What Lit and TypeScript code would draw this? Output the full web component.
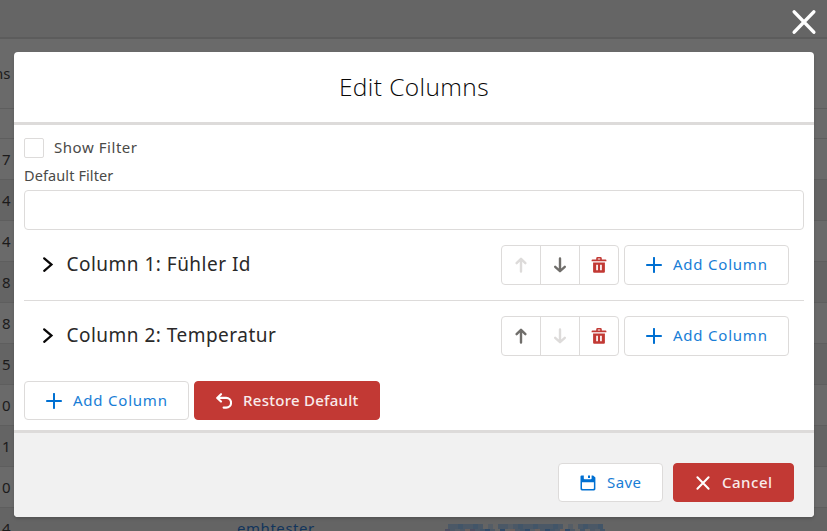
import { LitElement, html, css, svg, nothing } from "lit";
import { customElement, property } from "lit/decorators.js";

const icons: Record<string, unknown> = {
  plus: svg`<path d="M8 .9V15.1M.9 8H15.1" stroke="currentColor" stroke-width="2" stroke-linecap="round" fill="none"/>`,
  chevron: svg`<path d="M4.2 1.3L11.5 7.6L4.2 13.9" stroke="currentColor" stroke-width="2.2" stroke-linecap="round" stroke-linejoin="miter" fill="none"/>`,
  up: svg`<path d="M8 14.5V2.2M3.6 6.2L8 1.8L12.4 6.2" stroke="currentColor" stroke-width="2.4" stroke-linecap="round" stroke-linejoin="round" fill="none"/>`,
  down: svg`<path d="M8 1.5V13.8M3.2 9.8L8 14.2L12.8 9.8" stroke="currentColor" stroke-width="2.4" stroke-linecap="round" stroke-linejoin="round" fill="none"/>`,
  trash: svg`<path fill="currentColor" fill-rule="evenodd" d="M5.2 2.6V1.4Q5.2 0 6.6 0H9.4Q10.8 0 10.8 1.4V2.6H14.6Q15.4 2.6 15.4 3.3V4.2H.6V3.3Q.6 2.6 1.4 2.6ZM6.8 2.6H9.2V1.4H6.8ZM2.1 5.4H13.9V14.8Q13.9 15.8 12.9 15.8H3.1Q2.1 15.8 2.1 14.8ZM5.2 7.8V13.2H6.9V7.8ZM9.1 7.8V13.2H10.8V7.8Z"/>`,
  undo: svg`<path d="M5 1.2L1.2 4.9L5 8.6M1.4 4.9H10.2A4.7 4.7 0 0 1 10.2 14.6H7.6" stroke="currentColor" stroke-width="2.1" stroke-linecap="round" stroke-linejoin="round" fill="none"/>`,
  save: svg`<path fill="currentColor" fill-rule="evenodd" d="M1.6.5H3.8V3.4Q3.8 4.2 4.6 4.2H10.8Q11.6 4.2 11.6 3.4V.5H13.1L15.4 2.6V14Q15.4 15.4 14 15.4H1.9Q.5 15.4.5 14V1.6Q.5.5 1.6.5ZM8 .5H10V3H8ZM2 7.2V13.2Q2 14 2.8 14H13.1Q13.9 14 13.9 13.2V7.2Z"/>`,
  close: svg`<path d="M2.4 2.2L13.6 13.8M13.6 2.2L2.4 13.8" stroke="currentColor" stroke-width="2" stroke-linecap="round" fill="none"/>`,
};

@customElement("ui-icon")
class UiIcon extends LitElement {
  @property() name = "plus";
  static styles = css`
    :host { display: block; width: 16px; height: 16px; flex: none; }
    svg { display: block; width: 100%; height: 100%; }
  `;
  render() {
    return html`<svg viewBox="0 0 16 16">${icons[this.name]}</svg>`;
  }
}

@customElement("ui-button")
class UiButton extends LitElement {
  @property() icon = "plus";
  @property() label = "";
  @property({ reflect: true }) variant = "neutral";
  static styles = css`
    :host { display: block; flex: none; }
    button {
      display: flex; align-items: center; gap: 11px; box-sizing: border-box;
      width: 100%; height: 100%; padding: 0 0 0 21px; margin: 0;
      border: 1px solid #dddbda; border-radius: 4px; background: #fff; color: #0070d2;
      font: 15px "Noto Sans", sans-serif; letter-spacing: .78px; white-space: nowrap;
    }
    span { padding-bottom: 2px; opacity: .9; }
    .save { letter-spacing: .4px; }
    :host([variant="danger"]) button {
      background: #c23934; border-color: #c23934; color: #fff;
      font-weight: 500; letter-spacing: .27px;
    }
    :host([variant="danger"]) .close { letter-spacing: .5px; }
  `;
  render() {
    return html`<button><ui-icon name=${this.icon}></ui-icon><span class=${this.icon}>${this.label}</span></button>`;
  }
}

@customElement("column-row")
class ColumnRow extends LitElement {
  @property() heading = "";
  @property({ type: Boolean }) first = false;
  @property({ type: Boolean }) last = false;
  static styles = css`
    :host { display: flex; align-items: center; height: 70px; padding: 0 15px 0 16px; }
    .heading {
      flex: 1; margin-left: 10.5px; padding-bottom: 2px; color: #2a2929; white-space: nowrap;
      font: 19px "Noto Sans", sans-serif; letter-spacing: .48px;
    }
    .chevron { color: #080707; }
    .group { display: flex; height: 40px; width: 118px; box-sizing: border-box; border: 1px solid #dddbda; border-radius: 4px; margin-right: 5px; }
    .cell { flex: 1; display: flex; align-items: center; justify-content: center; color: #706e6b; }
    .cell + .cell { border-left: 1px solid #dddbda; }
    .cell.off { color: #dddbda; }
    .cell.trash { color: #c23934; }
    .add { width: 165px; height: 40px; }
  `;
  render() {
    return html`
      <ui-icon class="chevron" name="chevron"></ui-icon>
      <span class="heading">${this.heading}</span>
      <div class="group">
        <div class="cell ${this.first ? "off" : ""}"><ui-icon name="up"></ui-icon></div>
        <div class="cell ${this.last ? "off" : ""}"><ui-icon name="down"></ui-icon></div>
        <div class="cell trash"><ui-icon name="trash"></ui-icon></div>
      </div>
      <ui-button class="add" label="Add Column"></ui-button>
    `;
  }
}

const rows = ["7", "4", "4", "8", "8", "5", "0", "1", "0", "4"];

// Pixelated name: each letter picks the tone of one 5px block.
const tones: Record<string, string> = { a: "#4b5866", b: "#425568", c: "#555d66", d: "#6a5f5c", e: "#4b4d60", f: "#2f4a68" };
const mosaic = ["aabaaba.c.aacabaabaaaba.c.abaab", "eacadeabfa.f.dabfcdafbadfa.b.acb"];

@customElement("app-root")
class AppRoot extends LitElement {
  static styles = css`
    :host {
      display: block; position: relative; width: 827px; height: 531px; overflow: hidden;
      background: #6a6a6a; font-family: "Noto Sans", sans-serif;
    }
    .page { color: #1c1b1b; font-size: 15px; }
    .toolbar { height: 39px; box-sizing: border-box; background: #656565; border-bottom: 2px solid #5c5c5c; }
    .head { height: 70px; box-sizing: border-box; border-bottom: 1px solid #5e5e5e; display: flex; align-items: center; }
    .head span, .num { width: 10.5px; display: flex; justify-content: flex-end; white-space: nowrap; padding-bottom: 1px; }
    .sub { height: 30px; box-sizing: border-box; border-bottom: 1px solid #5e5e5e; }
    .row { height: 41px; box-sizing: border-box; border-bottom: 1px solid #5e5e5e; display: flex; align-items: center; }
    .row:nth-child(odd) { background: #646464; }
    .link { margin-left: 226.5px; width: 208px; color: #12355c; letter-spacing: .55px; }
    .mosaic { width: 160px; height: 10px; margin-top: 2px; }
    .modal {
      position: absolute; left: 14px; top: 52px; width: 800px; height: 465px;
      display: flex; flex-direction: column; border-radius: 4px; overflow: hidden;
      background: #fff; box-shadow: 0 2px 3px rgba(0, 0, 0, .16);
    }
    .close { position: absolute; left: 790px; top: 8px; width: 28px; height: 28px; color: #fff; }
    header {
      height: 73px; padding-bottom: 1px; box-sizing: border-box; border-bottom: 3px solid #dddbda; flex: none;
      display: flex; align-items: center; justify-content: center; color: #080707;
      font: 300 24.5px "Open Sans", sans-serif; letter-spacing: .4px;
    }
    main { height: 305px; padding: 13px 10px 0; box-sizing: border-box; }
    .check { display: flex; align-items: center; gap: 10px; height: 20px; font-size: 15px; letter-spacing: .55px; color: #4a4a48; }
    .check .text { padding-bottom: 2px; }
    .box { width: 20px; height: 20px; box-sizing: border-box; border: 1px solid #dddbda; border-radius: 2px; }
    .label { height: 32px; display: flex; align-items: center; padding-top: 1px; box-sizing: border-box; font-size: 14.5px; letter-spacing: .1px; color: #4a4a48; }
    .input { height: 40px; box-sizing: border-box; border: 1px solid #dddbda; border-radius: 4px; }
    .divider { height: 1px; background: #dddbda; }
    .actions { display: flex; gap: 5px; margin-top: 10px; height: 39px; }
    .w165 { width: 165px; } .w186 { width: 186px; } .w105 { width: 105px; } .w121 { width: 121px; }
    footer {
      flex: 1; box-sizing: border-box; background: #f1f1f1; border-top: 3px solid #dddbda;
      padding: 30px 20px 15px; display: flex; justify-content: flex-end; gap: 10px;
    }
  `;
  private link() {
    return html`<span class="link">emhtester</span>
      <svg class="mosaic" viewBox="0 0 160 10" shape-rendering="crispEdges">
        ${mosaic.map((line, y) => [...line].map((c, x) =>
          tones[c] ? svg`<rect x=${x * 5 + (y ? 0 : 3)} y=${y * 5} width="5" height="5" fill=${tones[c]}/>` : nothing))}
      </svg>`;
  }
  render() {
    return html`
      <div class="page">
        <div class="toolbar"></div>
        <div class="head"><span>ns</span></div>
        <div class="sub"></div>
        ${rows.map((n, i) => html`<div class="row"><span class="num">${n}</span>${i === rows.length - 1 ? this.link() : nothing}</div>`)}
      </div>
      <ui-icon class="close" name="close"></ui-icon>
      <section class="modal">
        <header>Edit Columns</header>
        <main>
          <label class="check"><span class="box"></span><span class="text">Show Filter</span></label>
          <div class="label">Default Filter</div>
          <div class="input"></div>
          <column-row heading="Column 1: Fühler Id" first></column-row>
          <div class="divider"></div>
          <column-row heading="Column 2: Temperatur" last></column-row>
          <div class="actions">
            <ui-button class="w165" label="Add Column"></ui-button>
            <ui-button class="w186" icon="undo" label="Restore Default" variant="danger"></ui-button>
          </div>
        </main>
        <footer>
          <ui-button class="w105" icon="save" label="Save"></ui-button>
          <ui-button class="w121" icon="close" label="Cancel" variant="danger"></ui-button>
        </footer>
      </section>
    `;
  }
}
